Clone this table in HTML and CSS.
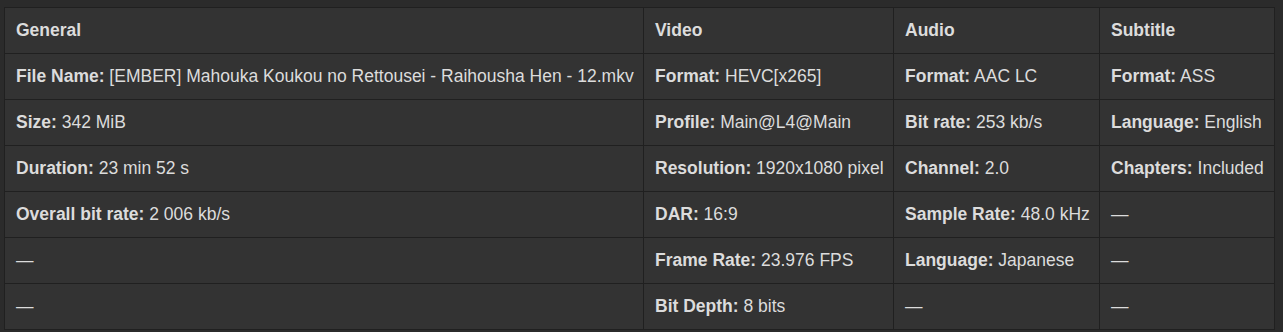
FILE: index.html
```html
<!DOCTYPE html>
<html>
<head>
<meta charset="utf-8">
<link rel="stylesheet" href="styles.css">
</head>
<body>
<div class="wrap">
<table class="info">
<colgroup>
<col class="c1"><col class="c2"><col class="c3"><col class="c4">
</colgroup>
<thead>
<tr><th>General</th><th>Video</th><th>Audio</th><th>Subtitle</th></tr>
</thead>
<tbody>
<tr>
<td><b>File Name:</b> [EMBER] Mahouka Koukou no Rettousei - Raihousha Hen - 12.mkv</td>
<td><b>Format:</b> HEVC[x265]</td>
<td><b>Format:</b> AAC LC</td>
<td><b>Format:</b> ASS</td>
</tr>
<tr>
<td><b>Size:</b> 342 MiB</td>
<td><b>Profile:</b> Main@L4@Main</td>
<td><b>Bit rate:</b> 253 kb/s</td>
<td><b>Language:</b> English</td>
</tr>
<tr>
<td><b>Duration:</b> 23 min 52 s</td>
<td><b>Resolution:</b> 1920x1080 pixel</td>
<td><b>Channel:</b> 2.0</td>
<td><b>Chapters:</b> Included</td>
</tr>
<tr>
<td><b>Overall bit rate:</b> 2 006 kb/s</td>
<td><b>DAR:</b> 16:9</td>
<td><b>Sample Rate:</b> 48.0 kHz</td>
<td>—</td>
</tr>
<tr>
<td>—</td>
<td><b>Frame Rate:</b> 23.976 FPS</td>
<td><b>Language:</b> Japanese</td>
<td>—</td>
</tr>
<tr>
<td>—</td>
<td><b>Bit Depth:</b> 8 bits</td>
<td>—</td>
<td>—</td>
</tr>
</tbody>
</table>
</div>
</body>
</html>
```

FILE: styles.css
```css
html, body {
  margin: 0;
  padding: 0;
  background: #2b2b2b;
}
.wrap {
  padding: 7px 0 0 4px;
}
.info {
  width: 1270px;
  table-layout: fixed;
  border-collapse: collapse;
  background: #333333;
  color: #dcdcdc;
  font-family: "Liberation Sans", Arial, sans-serif;
  font-size: 17.5px;
}
.c1 { width: 639px; }
.c2 { width: 250px; }
.c3 { width: 206px; }
.c4 { width: 175px; }
.info th, .info td {
  border: 1px solid #202020;
  padding: 13px 11px;
  line-height: 19px;
  height: 19px;
  text-align: left;
  white-space: nowrap;
  vertical-align: middle;
}
.info th { font-weight: bold; }
.info b { font-weight: bold; }
```
